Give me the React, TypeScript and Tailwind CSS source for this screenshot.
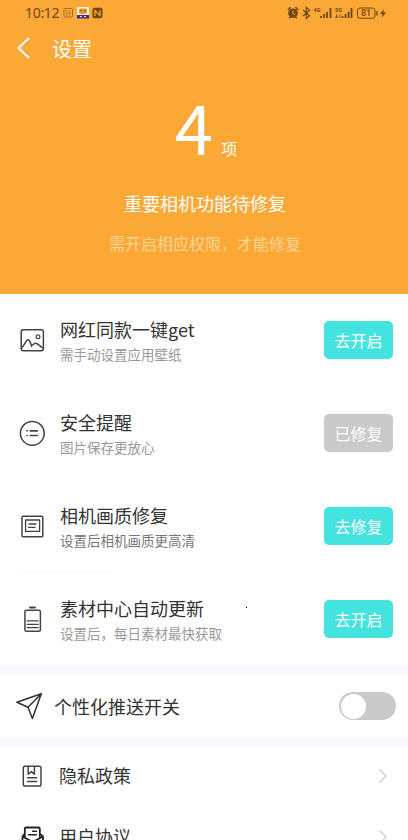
import React from 'react'

type IconProps = { className?: string }

const lineProps = {
    fill: 'none',
    stroke: 'currentColor',
    strokeWidth: 1.5,
    strokeLinecap: 'round' as const,
    strokeLinejoin: 'round' as const,
}

const PictureIcon: React.FC<IconProps> = ({ className }) => (
    <svg className={className} viewBox="0 0 26 26" {...lineProps}>
        <rect x="2.2" y="2.8" width="22.2" height="20.9" rx="2.2" />
        <circle cx="19" cy="9.8" r="1.9" strokeWidth="1.2" />
        <path d="M2.8 20.5C5.500 18.500 6.800 12.800 9 12.800s2.500 3.600 3.600 6.500M12.600 18.600c1.500-.4 2.400-2.400 4-2.300 2.500.1 3.800 3.200 7.400 4.500" />
    </svg>
)

const ListIcon: React.FC<IconProps> = ({ className }) => (
    <svg className={className} viewBox="0 0 26 26" {...lineProps}>
        <circle cx="13.300" cy="13.300" r="11.900" />
        <path d="M8 10.800h.1M11.300 10.800h7M8 15.500h.1M11.300 15.500h7" strokeWidth="1.700" />
    </svg>
)

const FrameIcon: React.FC<IconProps> = ({ className }) => (
    <svg className={className} viewBox="0 0 26 26" {...lineProps}>
        <rect x="3" y="3.300" width="20.800" height="20.400" rx="1" />
        <rect x="6.600" y="7" width="14" height="11.400" strokeWidth="1.300" />
        <path d="M10 11h7M9.500 14.300h6.500" strokeWidth="1.300" />
    </svg>
)

const BatteryIcon: React.FC<IconProps> = ({ className }) => (
    <svg className={className} viewBox="0 0 26 26" {...lineProps}>
        <path d="M11 1.500h5" strokeWidth="1.800" />
        <rect x="5.900" y="4.200" width="15.500" height="21" rx="1.500" />
        <path d="M8.200 14.800h11M8.200 18.300h11M8.200 21.700h11" strokeWidth="1.300" />
    </svg>
)

const PlaneIcon: React.FC<IconProps> = ({ className }) => (
    <svg className={className} viewBox="0 0 28 28" {...lineProps}>
        <path d="M26.300 1.700L1.900 10.300l11.100 4.900 4.400 11.300zM26.300 1.700L13 15.200" />
    </svg>
)

const PolicyIcon: React.FC<IconProps> = ({ className }) => (
    <svg className={className} viewBox="0 0 26 26" {...lineProps}>
        <rect x="4.300" y="3.200" width="17.700" height="19.800" rx="1.800" />
        <path d="M9.200 3.400v7.800l3.200-2.600 3 2.600V3.400" />
        <path d="M8.600 14.700h9M8.600 18.400h9" />
    </svg>
)

const AgreementIcon: React.FC<IconProps> = ({ className }) => (
    <svg className={className} viewBox="0 0 26 26" {...lineProps} strokeWidth={1.800}>
        <path d="M5.800 13V4.800q0-1.300 1.300-1.300h12.400q1.300 0 1.300 1.300V13" />
        <path d="M5.300 10.300L3.500 12.500v11H24v-11l-2.300-2.200M3.500 12.500l10.200 5.500L24 12.500" />
        <path d="M13.500 7.300h4M9.500 10.700h8" strokeWidth="1.400" />
    </svg>
)

const StatusBar: React.FC = () => (
    <div className="flex h-[26px] items-center justify-between pl-[25px] pr-[21px] text-[#70450f]">
        <div className="flex items-center">
            <span className="w-[38px] font-['Noto_Sans'] text-[14px] leading-none tracking-[-0.3px]">
                10:12
            </span>
            <svg className="h-3 w-[42px]" viewBox="0 0 42 12" fill="none">
                <rect x="1" y="1.500" width="8.500" height="8.500" rx="1" stroke="#a96d22" />
                <path d="M3 4h1.500M6 4h1.500M3 6h4.500M3 8h1.500M6 8h1.500" stroke="#a96d22" />
                <rect x="14" y="0" width="12" height="8" fill="#fff3d5" />
                <path d="M14 8h12v3.500h-12z" fill="#3f2a80" />
                <path d="M16 4q0-3 2-2.500h4q2-.5 2 2.500v2q-4 2.500-8 0z" fill="#e89536" />
                <path d="M17.500 3.800h1.500M21 3.800h1.500" stroke="#683c20" />
                <path d="M17 9.700h2M21 9.700h2" stroke="#fff" />
                <rect x="29.500" y=".8" width="10" height="10.400" rx="2" fill="#70450f" />
                <path d="M32 9V3.500l5 5V3" stroke="#fca836" strokeWidth="1.300" />
            </svg>
        </div>
        <svg className="h-4 w-[100px]" viewBox="0 0 100 16" fill="none" stroke="currentColor">
            <circle cx="6" cy="8.200" r="4.800" fill="currentColor" stroke="none" />
            <path d="M.8 5l2.700-2.700M11.200 5L8.500 2.300M2 13.300l1.500-1.300M10 13.300L8.500 12" strokeWidth="1.500" />
            <path d="M6 5.500v3l2 1.200" stroke="#fca836" />
            <path d="M16 5l6.500 5.800-3.200 2.700V2.300l3.200 2.900L16 11" strokeWidth="1.200" />
            <path d="M34 13v-2M37 13V9M40 13V7M43.500 13V3" strokeWidth="1.800" />
            <path d="M55.500 13v-2M58.500 13V9M61.500 13V7M64.500 13V3" strokeWidth="1.800" />
            <path d="M49.500 9.500v3.500M48 11.500l1.500 1.500 1.500-1.500M52.800 13V9.500" strokeWidth=".9" />
            <g
                fill="currentColor"
                stroke="none"
                fontFamily="Roboto, sans-serif"
                fontWeight="700"
            >
                <text x="26.500" y="7" fontSize="5.500">4G</text>
                <text x="48" y="7" fontSize="5.500">5G</text>
                <text x="74" y="11.400" fontSize="9" fontWeight="500">81</text>
            </g>
            <rect x="70.500" y="3" width="17.500" height="10.300" rx="2.500" />
            <path d="M90 6v4.500" strokeWidth="1.300" />
            <path d="M97 4l-4 5h2.600l-.6 3.500 4-5h-2.600z" fill="currentColor" stroke="none" />
        </svg>
    </div>
)

const repairItems = [
    { Icon: PictureIcon, title: '网红同款一键get', desc: '需手动设置应用壁纸', action: '去开启' },
    { Icon: ListIcon, title: '安全提醒', desc: '图片保存更放心', action: '已修复', done: true },
    { Icon: FrameIcon, title: '相机画质修复', desc: '设置后相机画质更高清', action: '去修复', dark: true },
    { Icon: BatteryIcon, title: '素材中心自动更新', desc: '设置后，每日素材最快获取', action: '去开启', dot: true },
]

const linkItems = [
    { Icon: PolicyIcon, title: '隐私政策', tone: 'text-[#444]' },
    { Icon: AgreementIcon, title: '用户协议', tone: 'text-[#222]' },
]

const App: React.FC = () => {
    return (
        <div className="h-[840px] w-full overflow-hidden bg-white font-['Noto_Sans_CJK_SC',sans-serif] text-[#333]">
            <header className="h-[294px] bg-[#fca836] text-white">
                <StatusBar />
                <div className="flex h-[44px] items-center pl-[17px]">
                    <svg
                        className="h-[22px] w-[14px]"
                        viewBox="0 0 14 22"
                        fill="none"
                        stroke="currentColor"
                        strokeWidth="2"
                    >
                        <path d="M12 1L1.500 11 12 21" />
                    </svg>
                    <h1 className="ml-[21px] pt-[2px] text-xl leading-none">设置</h1>
                </div>
                <div className="flex flex-col items-center">
                    <div className="flex h-[98px] items-baseline gap-[8px] pl-1">
                        <span className="text-[69px] leading-[111px]">4</span>
                        <span className="text-base">项</span>
                    </div>
                    <p className="mt-[21px] pl-[2px] text-lg leading-7">重要相机功能待修复</p>
                    <p className="mt-[14px] pl-[2px] text-base leading-6 text-[#fed594]">
                        需开启相应权限，才能修复
                    </p>
                </div>
            </header>

            <section>
                {repairItems.map(({ Icon, title, desc, action, done, dark, dot }) => (
                    <div
                        key={title}
                        className="relative flex h-[93px] items-center pb-px pl-[19px] pr-[15px]"
                    >
                        <Icon className="size-[26px] shrink-0 text-[#444]" />
                        <div className="ml-[15px] flex-1 pt-px">
                            <h2 className="text-lg leading-[26px]">{title}</h2>
                            <p
                                className={`text-[13.5px] leading-6 ${
                                    dark ? 'text-[#777]' : 'text-[#999]'
                                }`}
                            >
                                {desc}
                            </p>
                        </div>
                        <button
                            className={`h-[38px] w-[69px] rounded-[5px] text-base leading-none text-white ${
                                done ? 'bg-[#cacaca]' : 'bg-[#43e3df]'
                            }`}
                        >
                            {action}
                        </button>
                        {dark && (
                            <div className="absolute bottom-0 left-5 h-px w-[91px] bg-[#f7f7f7]" />
                        )}
                        {dot && <div className="absolute left-[246px] top-[34px] size-px bg-black" />}
                    </div>
                ))}
            </section>

            <section className="flex h-20 items-center border-y-8 border-[#f7f8fb] pl-[15px] pr-3">
                <PlaneIcon className="size-7 text-[#333]" />
                <span className="ml-[11px] flex-1 text-lg leading-none">个性化推送开关</span>
                <div className="flex h-[28px] w-[57px] items-center rounded-full bg-[#cacaca] pl-[2px]">
                    <div className="size-[25px] rounded-full bg-white" />
                </div>
            </section>

            <section>
                {linkItems.map(({ Icon, title, tone }) => (
                    <div key={title} className="flex h-[61px] items-center pb-px pl-[19px] pr-5">
                        <Icon className={`size-[26px] ${tone}`} />
                        <span className="ml-[14px] flex-1 pb-[2px] text-lg leading-none">{title}</span>
                        <svg
                            className="h-4 w-[10px] text-[#ccc]"
                            viewBox="0 0 10 16"
                            fill="none"
                            stroke="currentColor"
                            strokeWidth="1.300"
                        >
                            <path d="M1.500 1.500L8 8l-6.500 6.500" />
                        </svg>
                    </div>
                ))}
            </section>
        </div>
    )
}

export default App
